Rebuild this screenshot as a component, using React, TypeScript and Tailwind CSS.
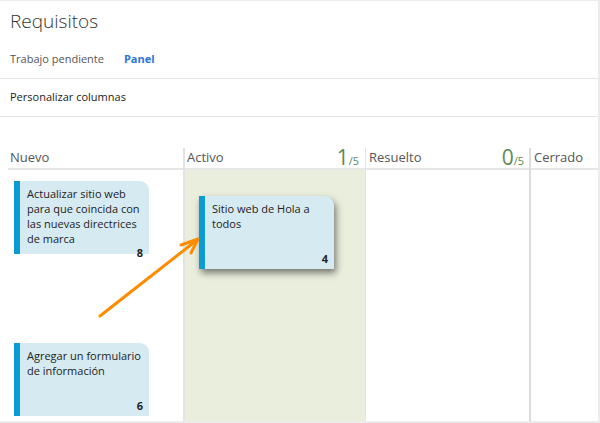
import React from 'react'

const font = { fontFamily: '"Segoe UI", "Open Sans", "Noto Sans", sans-serif' }

function Card({ title, points, raised }: { title: string; points: number; raised?: boolean }) {
  return (
    <div
      className={`flex h-[73px] w-[135px] rounded-tr-[9px] bg-[#d6eaf2] ${raised ? 'shadow-[2px_4px_7px_rgba(0,0,0,0.5)]' : ''}`}
    >
      <div className="w-[6px] shrink-0 bg-[#0a9bd0]" />
      <div className="flex flex-1 flex-col pl-[7px] pr-[6px] pt-[5px] pb-[3px]">
        <div className="text-[11px] leading-[15px] text-[#222]">{title}</div>
        <div className="mt-auto text-right text-[11px] font-bold leading-[14px] text-[#222]">{points}</div>
      </div>
    </div>
  )
}

function Count({ n }: { n: number }) {
  return (
    <span className="flex items-baseline text-[#5b8a58]">
      <span className="text-[21px] leading-none">{n}</span>
      <span className="text-[11px]">/5</span>
    </span>
  )
}

export default function App() {
  return (
    <div
      className="relative flex h-[423px] w-[600px] flex-col overflow-hidden border-r-[2px] border-b-[2px] border-t border-[#ececec] bg-white"
      style={font}
    >
      {/* Header */}
      <div className="flex h-[40px] shrink-0 items-center px-[10px] text-[19px] font-light text-[#333]">Requisitos</div>
      <div className="flex h-[38px] shrink-0 items-center gap-[20px] border-b border-[#e3e3e3] px-[10px] text-[11px]">
        <span className="text-[#555]">Trabajo pendiente</span>
        <span className="font-bold text-[#2b74d8]">Panel</span>
      </div>
      <div className="flex h-[38px] shrink-0 items-center border-b border-[#e3e3e3] px-[10px] text-[11px] text-[#222]">
        Personalizar columnas
      </div>

      {/* Board */}
      <div className="mt-[31px] flex flex-1 pl-[8px]">
        <div className="flex w-[175px] flex-col">
          <div className="flex h-[22px] items-center border-b-2 border-[#e6e6e6] pl-[2px] text-[13px] text-[#555]">Nuevo</div>
          <div className="flex flex-1 flex-col pl-[6px]">
            <div className="mt-[11px]">
              <Card title="Actualizar sitio web para que coincida con las nuevas directrices de marca" points={8} />
            </div>
            <div className="mt-[89px]">
              <Card title="Agregar un formulario de información" points={6} />
            </div>
          </div>
        </div>
        <div className="flex w-[182px] flex-col border-l-2 border-[#e3e3e3]">
          <div className="flex h-[22px] items-center justify-between border-b-2 border-[#e6e6e6] pl-[2px] pr-[6px] text-[13px] text-[#555]">
            <span>Activo</span>
            <Count n={1} />
          </div>
          <div className="flex-1 bg-[#eaeedd] pl-[14px] pt-[26px]">
            <Card title="Sitio web de Hola a todos" points={4} raised />
          </div>
        </div>
        <div className="flex w-[164px] flex-col border-l border-[#e3e3e3]">
          <div className="flex h-[22px] items-center justify-between border-b-2 border-[#e6e6e6] pl-[3px] pr-[5px] text-[13px] text-[#555]">
            <span>Resuelto</span>
            <Count n={0} />
          </div>
          <div className="flex-1" />
        </div>
        <div className="flex flex-1 flex-col border-l-2 border-[#dcdcdc]">
          <div className="flex h-[22px] items-center border-b-2 border-[#e6e6e6] pl-[3px] text-[13px] text-[#555]">Cerrado</div>
          <div className="flex-1" />
        </div>
      </div>

      {/* Arrow */}
      <svg className="absolute left-0 top-0" width="600" height="423" viewBox="0 0 600 423">
        <g stroke="#ff8c00" strokeWidth="3" strokeLinecap="round" fill="none">
          <line x1="100" y1="315" x2="197" y2="239" />
          <polyline points="181,244 198,238 191,252" strokeLinejoin="round" />
        </g>
      </svg>
    </div>
  )
}
